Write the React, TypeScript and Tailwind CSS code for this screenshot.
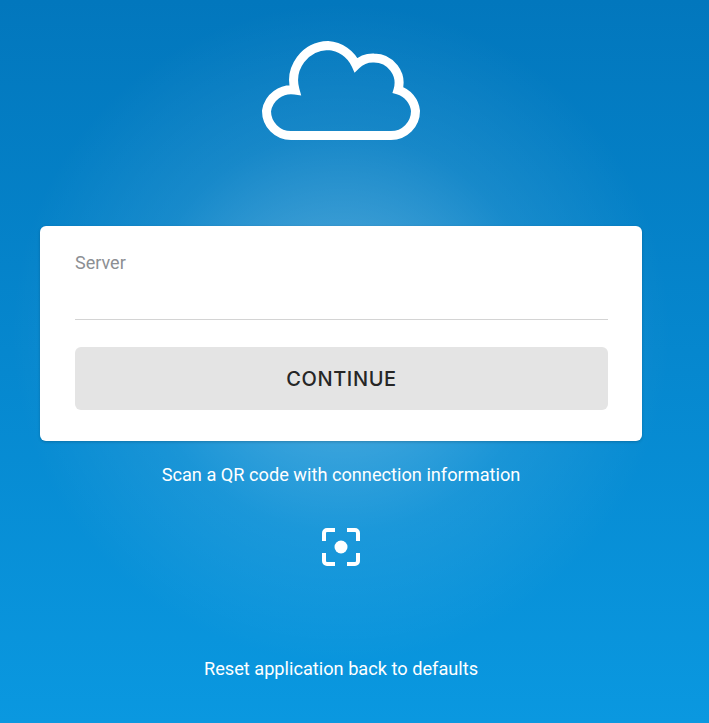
export default function App() {
  return (
    <div className="relative h-[723px] w-[709px] overflow-hidden bg-[linear-gradient(180deg,#0277bd_0%,#0a98e0_100%)] font-['Roboto',sans-serif]">
      <div className="flex h-full w-[682px] flex-col items-center bg-[radial-gradient(circle_at_341px_333px,rgba(255,255,255,0.3)_0%,rgba(255,255,255,0.2)_110px,rgba(255,255,255,0.08)_200px,rgba(255,255,255,0)_330px)]">
        <svg
          className="mt-[41px] block h-[100px] w-[158px] shrink-0"
          viewBox="261 41 158 100"
          fill="none"
          stroke="#ffffff"
          strokeWidth="9"
          strokeLinejoin="miter"
        >
          <path d="M294 90A35 35 0 0 1 327 45.5A33 33 0 0 1 355 65A24 24 0 0 1 373 58A25 25 0 0 1 397 90A24 24 0 0 1 414.5 111A24.5 24.5 0 0 1 390 135.5H290A24.5 24.5 0 0 1 265.5 111A25 25 0 0 1 294 90Z" />
        </svg>
        <div className="mt-[85px] flex h-[215px] w-[602px] shrink-0 flex-col rounded-md bg-white pl-[35px] pr-[34px] shadow-[0_1px_3px_rgba(0,0,0,0.2)]">
          <div className="mt-[27px] text-lg leading-5 text-[#8c8f93]">Server</div>
          <div className="mt-[46px] h-px bg-[#d4d4d4]" />
          <button className="mt-[27px] flex h-[63px] items-center justify-center rounded-md bg-[#e4e4e4] font-['Inter',sans-serif] text-xl font-[550] tracking-[0.6px] text-[#262626]">
            CONTINUE
          </button>
        </div>
        <div className="mt-6 text-[18.2px] leading-5 text-white">Scan a QR code with connection information</div>
        <svg className="mt-[43px] block h-[38px] w-[38px] shrink-0" viewBox="0 0 38 38" fill="none" stroke="#ffffff" strokeWidth="4" strokeLinecap="butt">
          <path d="M2 13V5a3 3 0 0 1 3-3h8M25 2h8a3 3 0 0 1 3 3v8M36 25v8a3 3 0 0 1-3 3h-8M13 36H5a3 3 0 0 1-3-3v-8" />
          <circle cx="19" cy="19" r="6.5" fill="#ffffff" stroke="none" />
        </svg>
        <div className="mt-[93px] text-[18.2px] leading-5 text-white">Reset application back to defaults</div>
      </div>
    </div>
  );
}
